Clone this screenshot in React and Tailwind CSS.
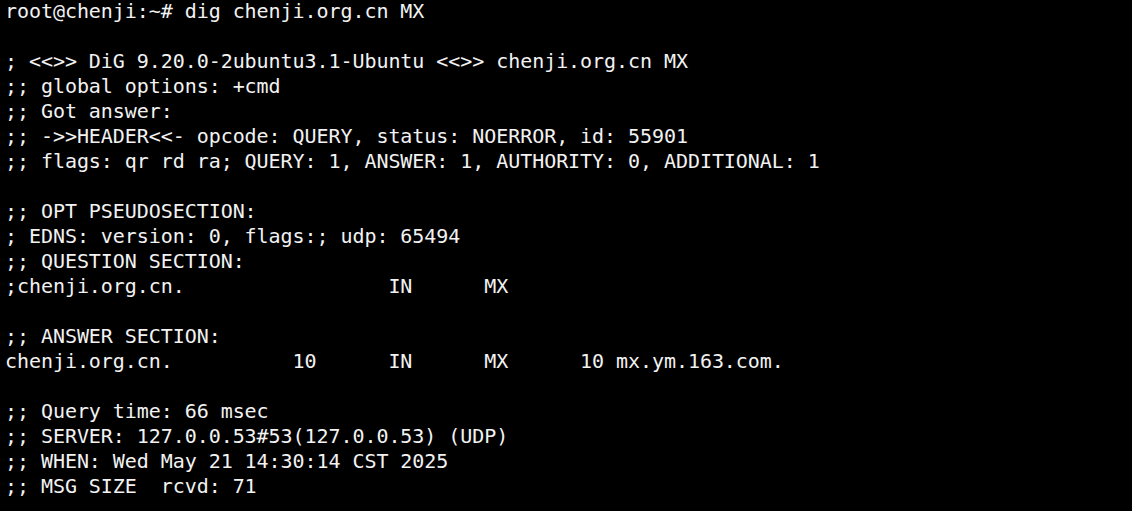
import React from "react";

const lines = [
  "root@chenji:~# dig chenji.org.cn MX",
  "",
  "; <<>> DiG 9.20.0-2ubuntu3.1-Ubuntu <<>> chenji.org.cn MX",
  ";; global options: +cmd",
  ";; Got answer:",
  ";; ->>HEADER<<- opcode: QUERY, status: NOERROR, id: 55901",
  ";; flags: qr rd ra; QUERY: 1, ANSWER: 1, AUTHORITY: 0, ADDITIONAL: 1",
  "",
  ";; OPT PSEUDOSECTION:",
  "; EDNS: version: 0, flags:; udp: 65494",
  ";; QUESTION SECTION:",
  ";chenji.org.cn.                 IN      MX",
  "",
  ";; ANSWER SECTION:",
  "chenji.org.cn.          10      IN      MX      10 mx.ym.163.com.",
  "",
  ";; Query time: 66 msec",
  ";; SERVER: 127.0.0.53#53(127.0.0.53) (UDP)",
  ";; WHEN: Wed May 21 14:30:14 CST 2025",
  ";; MSG SIZE  rcvd: 71",
];

const App = () => {
  return (
    <div className="w-[1132px] h-[511px] bg-black overflow-hidden px-[5px]">
      <div className="-mt-px font-['DejaVu_Sans_Mono',monospace] text-[20px] tracking-[-0.06px] leading-[25px] text-[#f2f2f2] whitespace-pre">
        {lines.map((line, i) => (
          <div key={i} className="h-[25px]">
            {line}
          </div>
        ))}
      </div>
    </div>
  );
};

export default App;
